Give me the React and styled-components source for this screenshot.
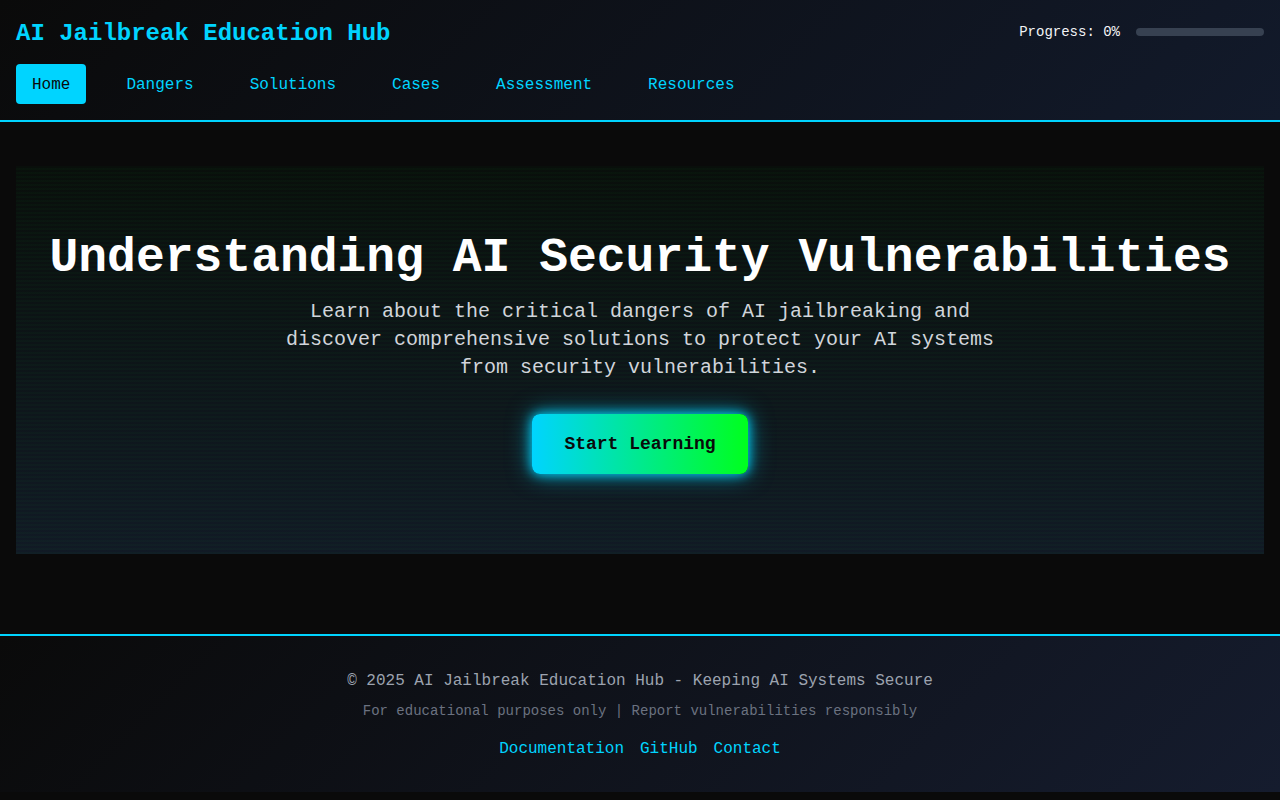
import React from "react";
import styled, { createGlobalStyle } from "styled-components";

const Global = createGlobalStyle`
  html, body { margin: 0; padding: 0; background: #0a0a0a; }
  body { font-family: "Liberation Mono", "Courier New", monospace; color: #e5e7eb; }
  * { box-sizing: border-box; }
`;

const Page = styled.div`
  min-height: 800px;
  background: #0a0a0a;
  padding-bottom: 8px;
`;

const Header = styled.header`
  background: linear-gradient(135deg, #0a0a0a 0%, #121a2b 100%);
  border-bottom: 2px solid #00d4ff;
  padding: 16px;
`;

const TopRow = styled.div`
  display: flex;
  justify-content: space-between;
  align-items: center;
  height: 32px;
  margin-bottom: 16px;
`;

const Logo = styled.h1`
  margin: 0;
  padding-top: 4px;
  font-size: 24px;
  font-weight: 700;
  color: #00d4ff;
  line-height: 28px;
`;

const ProgressWrap = styled.div`
  display: flex;
  align-items: center;
  gap: 16px;
  font-size: 14px;
  color: #f3f4f6;
`;

const Track = styled.div`
  width: 128px;
  height: 8px;
  border-radius: 4px;
  background: #374151;
  overflow: hidden;
`;

const Fill = styled.div`
  height: 100%;
  background: linear-gradient(90deg, #00d4ff, #00ff41);
`;

const Nav = styled.nav`
  display: flex;
  gap: 24px;
`;

const NavItem = styled.a`
  display: block;
  height: 40px;
  padding: 9px 16px 7px;
  line-height: 24px;
  font-size: 16px;
  border-radius: 4px;
  cursor: pointer;
  color: ${(p) => (p.$active ? "#0a0a0a" : "#00d4ff")};
  background: ${(p) => (p.$active ? "#00d4ff" : "transparent")};
`;

const Main = styled.main`
  padding: 44px 16px 80px;
`;

const Hero = styled.section`
  position: relative;
  text-align: center;
  padding: 64px 16px 80px;
  background:
    repeating-linear-gradient(
      0deg,
      rgba(0, 255, 65, 0.025) 0px,
      rgba(0, 255, 65, 0.025) 2px,
      transparent 2px,
      transparent 4px
    ),
    linear-gradient(180deg, #090f0b 0%, #111a25 100%);
`;

const HeroTitle = styled.h2`
  margin: 0 0 10px;
  font-size: 48px;
  line-height: 1.2;
  font-weight: 700;
  color: #ffffff;
`;

const HeroText = styled.p`
  margin: 0 auto 32px;
  max-width: 730px;
  font-size: 20px;
  line-height: 28px;
  color: #d1d5db;
`;

const CTA = styled.button`
  font-family: inherit;
  font-size: 18px;
  font-weight: 700;
  color: #0a0a0a;
  border: none;
  border-radius: 8px;
  padding: 18px 32px;
  line-height: 24px;
  background: linear-gradient(90deg, #00d4ff 0%, #00ff1e 100%);
  box-shadow: 0 0 12px #00d4ff, 0 0 24px rgba(0, 212, 255, 0.6);
  cursor: pointer;
`;

const Footer = styled.footer`
  border-top: 2px solid #00d4ff;
  background: linear-gradient(135deg, #0a0a0a 0%, #151c2e 100%);
  padding: 33px 16px 31px;
  text-align: center;
`;

const FootLine = styled.p`
  margin: 0 0 8px;
  font-size: 16px;
  line-height: 24px;
  color: #9ca3af;
`;

const FootNote = styled.p`
  margin: 0 0 16px;
  font-size: 14px;
  line-height: 20px;
  color: #6b7280;
`;

const FootLinks = styled.div`
  display: flex;
  justify-content: center;
  gap: 16px;
`;

const FootLink = styled.a`
  font-size: 16px;
  line-height: 24px;
  color: #00d4ff;
  text-decoration: none;
`;

const navItems = ["Home", "Dangers", "Solutions", "Cases", "Assessment", "Resources"];

export default function App() {
  const progress = 0;
  return (
    <Page>
      <Global />
      <Header>
        <TopRow>
          <Logo>AI Jailbreak Education Hub</Logo>
          <ProgressWrap>
            <span>Progress: {progress}%</span>
            <Track>
              <Fill style={{ width: `${progress}%` }} />
            </Track>
          </ProgressWrap>
        </TopRow>
        <Nav>
          {navItems.map((n, i) => (
            <NavItem key={n} $active={i === 0}>
              {n}
            </NavItem>
          ))}
        </Nav>
      </Header>
      <Main>
        <Hero>
          <HeroTitle>Understanding AI Security Vulnerabilities</HeroTitle>
          <HeroText>
            Learn about the critical dangers of AI jailbreaking and discover comprehensive
            solutions to protect your AI systems from security vulnerabilities.
          </HeroText>
          <CTA>Start Learning</CTA>
        </Hero>
      </Main>
      <Footer>
        <FootLine>© 2025 AI Jailbreak Education Hub - Keeping AI Systems Secure</FootLine>
        <FootNote>For educational purposes only | Report vulnerabilities responsibly</FootNote>
        <FootLinks>
          <FootLink href="#">Documentation</FootLink>
          <FootLink href="#">GitHub</FootLink>
          <FootLink href="#">Contact</FootLink>
        </FootLinks>
      </Footer>
    </Page>
  );
}
